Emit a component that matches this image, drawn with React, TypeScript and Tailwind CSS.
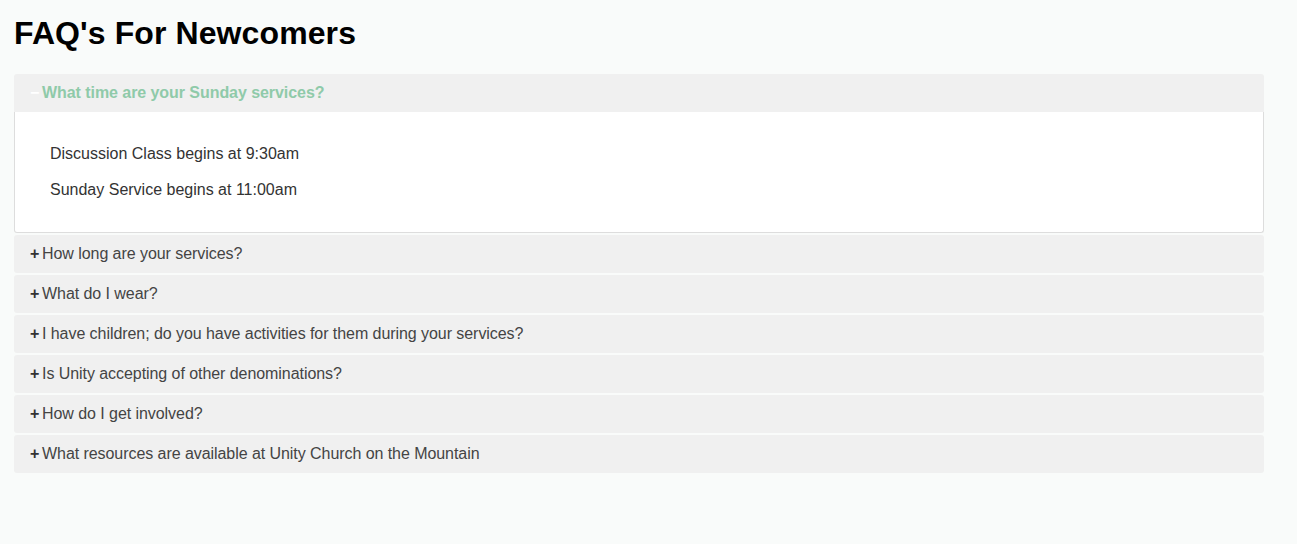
import React from "react";

const questions = [
  "How long are your services?",
  "What do I wear?",
  "I have children; do you have activities for them during your services?",
  "Is Unity accepting of other denominations?",
  "How do I get involved?",
  "What resources are available at Unity Church on the Mountain",
];

export default function App() {
  return (
    <div
      className="min-h-[544px] bg-[#f9fbfa] px-[14px] pt-[14px]"
      style={{ fontFamily: '"Liberation Sans", Arial, sans-serif' }}
    >
      <h1 className="text-[32px] font-bold leading-[38px] text-black m-0 tracking-[0.1px]">FAQ's For Newcomers</h1>
      <div className="mt-[22px] w-[1250px] flex flex-col gap-[2px]">
        <div>
          <div className="h-[38px] bg-[#f0f0f0] rounded-t-[3px] flex items-center pl-[16px] text-[16px] font-bold text-[#8fcaa9] tracking-[-0.06px]">
            <span className="w-[12px] text-white font-bold">−</span>
            <span>What time are your Sunday services?</span>
          </div>
          <div className="bg-white border border-t-0 border-[#dddddd] rounded-b-[3px] pl-[35px] pt-[29px] pb-[29px] text-[16px] leading-[26px] text-[#333333]">
            <p className="mb-[10px]">Discussion Class begins at 9:30am</p>
            <p>Sunday Service begins at 11:00am</p>
          </div>
        </div>
        {questions.map((q) => (
          <div
            key={q}
            className="h-[38px] bg-[#f0f0f0] rounded-[3px] flex items-center pl-[16px] text-[16px] text-[#444444] tracking-[-0.06px]"
          >
            <span className="w-[12px] font-bold text-[#333333]">+</span>
            <span>{q}</span>
          </div>
        ))}
      </div>
    </div>
  );
}
